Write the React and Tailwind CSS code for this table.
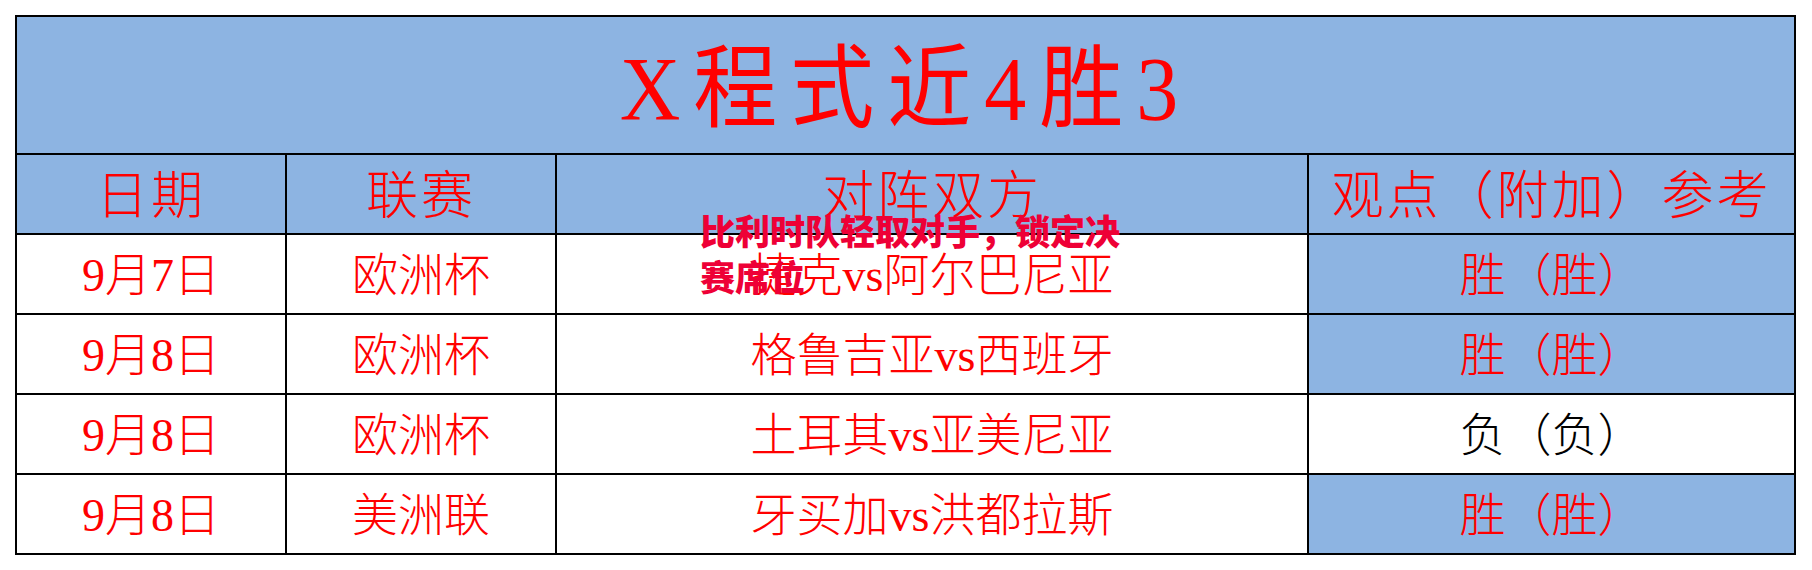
const serif = "font-['Liberation_Serif','Noto_Sans_CJK_SC',serif]";

const rows = [
  { date: "9月7日", league: "欧洲杯", match: "捷克vs阿尔巴尼亚", pick: "胜（胜）", win: true },
  { date: "9月8日", league: "欧洲杯", match: "格鲁吉亚vs西班牙", pick: "胜（胜）", win: true },
  { date: "9月8日", league: "欧洲杯", match: "土耳其vs亚美尼亚", pick: "负（负）", win: false },
  { date: "9月8日", league: "美洲联", match: "牙买加vs洪都拉斯", pick: "胜（胜）", win: true },
];

const headers = ["日期", "联赛", "对阵双方", "观点（附加）参考"];

const Cell = ({ children, classes = "" }) => (
  <div className={"flex items-center justify-center " + classes}>{children}</div>
);

export default function App() {
  return (
    <div className="relative min-h-[570px] w-[1812px] bg-white pl-[15px] pt-[15px]">
      <div
        className={
          "grid w-[1781px] grid-cols-[268px_268px_750px_485px] grid-rows-[136px_repeat(5,78px)] gap-[2px] border-2 border-black bg-black " +
          serif
        }
      >
        {/* title */}
        <Cell classes="col-span-4 bg-[#8db4e2] pt-[10px]">
          <h1 className="origin-center scale-y-[1.08] text-[84px] leading-none tracking-[13px] text-[#ff0000]">
            X程式近4胜3
          </h1>
        </Cell>

        {/* header */}
        {headers.map((label) => (
          <Cell key={label} classes="bg-[#8db4e2] pt-[6px]">
            <span className="text-[52px] font-light leading-none tracking-[3px] text-[#ff0000]">{label}</span>
          </Cell>
        ))}

        {/* rows */}
        {rows.map((row, i) => (
          <div key={i} className="contents">
            <Cell classes="bg-white pt-[4px]">
              <span className="text-[46px] font-light leading-none text-[#ff0000]">{row.date}</span>
            </Cell>
            <Cell classes="bg-white pt-[4px]">
              <span className="text-[46px] font-light leading-none text-[#ff0000]">{row.league}</span>
            </Cell>
            <Cell classes="bg-white pt-[4px]">
              <span className="text-[46px] font-light leading-none text-[#ff0000]">{row.match}</span>
            </Cell>
            <Cell classes={(row.win ? "bg-[#8db4e2]" : "bg-white") + " pt-[4px]"}>
              <span
                className={
                  "text-[46px] font-light leading-none " + (row.win ? "text-[#ff0000]" : "text-black")
                }
              >
                {row.pick}
              </span>
            </Cell>
          </div>
        ))}
      </div>

      {/* headline overlay */}
      <p className="absolute left-[700px] top-[207px] w-[440px] font-['Noto_Sans_CJK_SC',sans-serif] text-[35px] font-black leading-[46px] text-[#ee0036]">
        比利时队轻取对手，锁定决赛席位
      </p>
    </div>
  );
}
